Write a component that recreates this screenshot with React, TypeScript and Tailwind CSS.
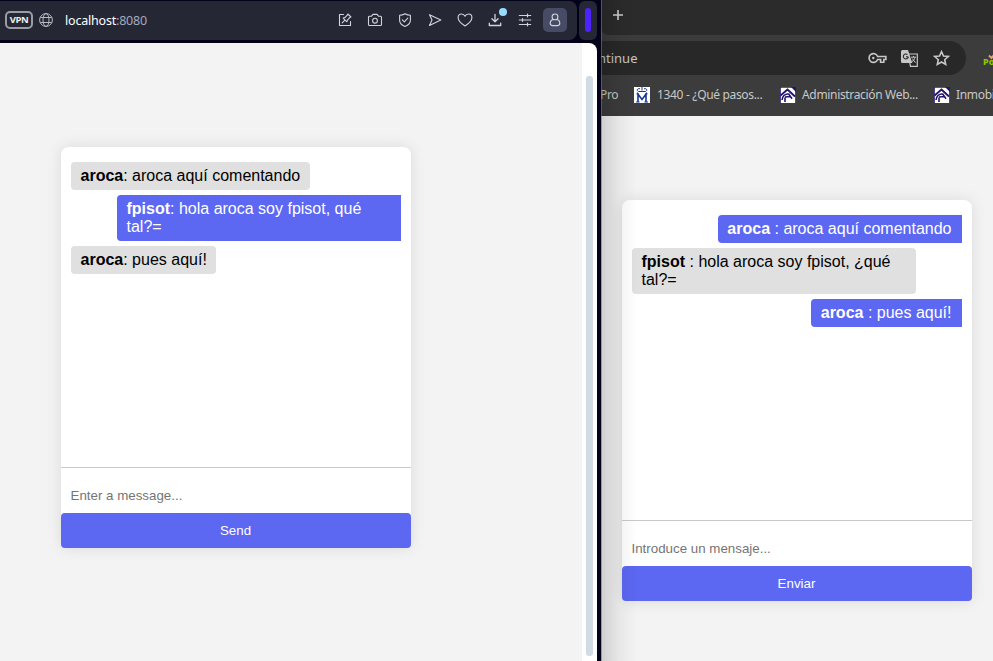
import type { ReactNode } from "react";

const arial = "font-['Liberation_Sans',Arial,sans-serif]";
const ui = "font-['Noto_Sans','Open_Sans',sans-serif]";

type Message = { author: string; text: string; tail?: string; mine?: boolean };

function Bubble({ author, text, tail, mine }: Message) {
  return (
    <div
      className={
        mine
          ? "max-w-[284px] self-end rounded-l-[4px] bg-[#5c67f2] py-[5px] pr-[10.5px] pl-[9.5px] text-white"
          : "max-w-[284px] self-start rounded-[4px] bg-[#e0e0e0] px-[9.5px] py-[5px] text-black"
      }
    >
      <strong className="font-bold">{author}</strong>
      {text}
      {tail && <span className="whitespace-nowrap">{tail}</span>}
    </div>
  );
}

function Chat({ messages, placeholder, action }: { messages: Message[]; placeholder: string; action: string }) {
  return (
    <div className={`flex h-[401px] w-[350px] shrink-0 flex-col rounded-t-[8px] rounded-b-[5px] bg-white shadow-[0_0_15px_rgba(0,0,0,0.1)] ${arial}`}>
      <div className="flex h-[321px] flex-col gap-[5px] border-b border-[#c9c9c9] px-[10px] pt-[15px] text-[16px] leading-[18px]">
        {messages.map((m) => (
          <Bubble key={m.text} {...m} />
        ))}
      </div>
      <div className="h-[45px] px-[9.5px] pt-[20px] text-[13.333px] leading-[15px] text-[#757575]">{placeholder}</div>
      <div className="flex h-[35px] items-center justify-center rounded-[4px] bg-[#5c67f2] pr-px text-[13.333px] leading-[15px] text-white">
        {action}
      </div>
    </div>
  );
}

function Line({ children }: { children: ReactNode }) {
  return (
    <svg width="16" height="16" viewBox="0 0 16 16" fill="none" stroke="currentColor" strokeWidth="1.1" strokeLinecap="round" strokeLinejoin="round">
      {children}
    </svg>
  );
}

const toolIcons: ReactNode[] = [
  <Line key="note">
    <path d="M6.5 2.5h-4v11h11V9.5" />
    <path d="m10.9 2 3 3-1.2.6-2.3 2.6-.5 1.6-3.7-3.7 1.6-.5 2.5-2.4zM7.6 8.4 5.2 10.8" />
  </Line>,
  <Line key="camera">
    <path d="M1.5 5.2a1 1 0 0 1 1-1h2L6 2.4h4l1.5 1.8h2a1 1 0 0 1 1 1v7.3a1 1 0 0 1-1 1h-11a1 1 0 0 1-1-1z" />
    <circle cx="8" cy="8.7" r="2.4" />
  </Line>,
  <Line key="shield">
    <path d="M8 1.7c1.8 1.1 3.6 1.5 5.4 1.5v5c0 2.9-2.1 4.9-5.4 6.2-3.3-1.3-5.4-3.3-5.4-6.2v-5c1.8 0 3.6-.4 5.4-1.5z" />
    <path d="m5.3 7.8 2 2 3.5-3.6" />
  </Line>,
  <Line key="send">
    <path d="M2.5 2.7 13.8 8 2.5 13.5 5 8z" />
  </Line>,
  <Line key="heart">
    <path d="M8 14C4.5 11.8 1.1 8.9 1.1 5.5c0-2 1.4-3.5 3.3-3.5C6 2 7.4 2.9 8 4.3 8.6 2.9 10 2 11.6 2c1.9 0 3.3 1.5 3.3 3.5 0 3.4-3.4 6.3-6.9 8.5z" />
  </Line>,
  <div key="download" className="relative">
    <Line>
      <path d="M8 2.3v7.2M4.9 6.7 8 9.8l3.1-3.1M2.3 11.2v2.3h11.4v-2.3" strokeWidth="1.3" />
    </Line>
    <span className="absolute -top-[4px] left-[12px] size-[8px] rounded-full bg-[#97dcff]" />
  </div>,
  <Line key="sliders">
    <path d="M2.3 3.5h11.4M2.3 8h11.4M2.3 12.5h11.4M10.5 2.2v2.6M5.5 6.7v2.6M10.5 11.2v2.6" strokeWidth="1.2" />
  </Line>,
  <div key="person" className="flex size-[24px] items-center justify-center rounded-[5px] bg-[#484b65]">
    <Line>
      <circle cx="8" cy="4.9" r="2.9" />
      <path d="M5.8 7.4c-1.8.7-2.6 2-2.6 3.6 0 1.7.9 2.6 2.4 2.6h4.8c1.5 0 2.4-.9 2.4-2.6 0-1.6-.8-2.9-2.6-3.6" />
    </Line>
  </div>,
];

function LeftWindow() {
  return (
    <div className="z-10 flex h-full w-[601px] shrink-0 flex-col bg-[#02031a]">
      <div className={`flex h-[43px] shrink-0 gap-[2px] pt-px pb-[3px] ${ui}`}>
        <div className="flex w-[577px] items-center rounded-r-[8px] bg-[#252834] pr-[7px] pb-px pl-[5px] text-[#d2d4dc]">
          <div className="flex h-[18px] w-[28px] items-center justify-center rounded-[5px] border-2 border-[#9c9da4] font-['Open_Sans',sans-serif] text-[9.5px] leading-none font-bold tracking-[-0.5px] text-[#eeeeef]">
            VPN
          </div>
          <svg className="ml-[6px]" width="14" height="14" viewBox="0 0 14 14" fill="none" stroke="#b8b9bf" strokeWidth="1">
            <circle cx="7" cy="7" r="6.4" />
            <ellipse cx="7" cy="7" rx="3" ry="6.4" />
            <path d="M1.3 4.5h11.4M1.3 9.5h11.4" />
          </svg>
          <div className="ml-[12px] pt-px text-[12.5px] leading-4 tracking-[-0.2px] whitespace-nowrap text-[#a4aabd]">
            <span className="text-white">localhost</span>:8080
          </div>
          <div className="ml-auto flex">
            {toolIcons.map((icon, i) => (
              <div key={i} className="flex h-[30px] w-[30px] items-center justify-center">
                {icon}
              </div>
            ))}
          </div>
        </div>
        <div className="flex w-[18px] items-center justify-center rounded-[6px] bg-[#252834] pb-px">
          <div className="h-[24px] w-[6px] rounded-[3px] bg-[#4d22ff]" />
        </div>
      </div>
      <div className="flex w-[597px] flex-1 overflow-hidden rounded-tr-[8px] bg-white">
        <div className="w-[582px] bg-[#f3f3f3] pt-[104px] pl-[61px]">
          <Chat
            placeholder="Enter a message..."
            action="Send"
            messages={[
              { author: "aroca", text: ": aroca aquí comentando" },
              { author: "fpisot", text: ": hola aroca soy fpisot, qué ", tail: "tal?=", mine: true },
              { author: "aroca", text: ": pues aquí!" },
            ]}
          />
        </div>
        <div className="mt-[33px] ml-[4px] h-[580px] w-[7px] rounded-[3px] bg-[#d1dbe4]" />
      </div>
    </div>
  );
}

function BrandIcon() {
  return (
    <svg width="16" height="16" viewBox="0 0 16 16" className="shrink-0">
      <path fill="#fff" d="M0 0h16v16H0z" />
      <g fill="none" stroke="#24136f">
        <path d="M.5 0v16M15.5 0v16M0 .4h16" strokeWidth=".8" />
        <path d="M.5 8.5 7.5 2.5 15 9.5" strokeWidth="1.9" />
        <path d="M2 13c.5-4 3-6 6.5-6.3M5 10l5.5-.5M8.5 6.7l3.5 5M5 10.5V15" strokeWidth="1.6" />
      </g>
      <path d="M11 0h5v5z" fill="#24136f" />
    </svg>
  );
}

function CrownIcon() {
  return (
    <svg width="16" height="16" viewBox="0 0 16 16" className="shrink-0">
      <path fill="#fff" d="M0 0h16v16H0z" />
      <g fill="none" stroke="#173694">
        <path d="M4.5 4.4C1.8 3.2 4 .9 6 1.8M11.5 4.4C14.2 3.2 12 .9 10 1.8M8 0v3.5M4.5 4.5h7" strokeWidth="1" />
        <path d="M4 15V7.2L8 12.4 12 7.2V15" strokeWidth="1.6" />
        <path d="M2 15h3.6M10.4 15H14M2.5 6.9h2M11.5 6.9h2" strokeWidth="1.1" />
      </g>
    </svg>
  );
}

function RightWindow() {
  return (
    <div className="relative flex h-full w-[392px] shrink-0 flex-col overflow-hidden bg-[#f3f3f3]">
      <div className="h-[35px] shrink-0 bg-[#3c3c3c]">
        <div className="h-full rounded-bl-[8px] bg-[#2b2b2b] pt-[10px] pl-[12px]">
          <svg width="10" height="10" viewBox="0 0 10 10" stroke="#d0d0d0" strokeWidth="1.6">
            <path d="M5 0v10M0 5h10" />
          </svg>
        </div>
      </div>
      <div className={`h-[81px] shrink-0 bg-[#3c3c3c] pt-[6px] ${ui}`}>
        <div className="flex">
          <div className="flex h-[34px] w-[365px] shrink-0 items-center rounded-r-full bg-[#282828] pr-[16px] text-[13px] text-[#c8c8c8]">
            <span className="-ml-[3px] pt-px">ntinue</span>
            <div className="ml-auto flex items-center">
              <svg width="19" height="12" viewBox="0 0 19 12" fill="none" stroke="#c7c7c7" strokeWidth="1.6">
                <path d="M9.6 4.5A4.4 4.4 0 1 0 9.6 7.5h3v2.7h3.2V7.5h2.1v-3z" />
                <circle cx="5.3" cy="6" r="1.2" fill="#c7c7c7" stroke="none" />
              </svg>
              <svg className="ml-[14px]" width="17" height="17" viewBox="0 0 17 17">
                <path d="M7 4h9.3v12.3H9.5z" fill="none" stroke="#c7c7c7" strokeWidth="1.2" />
                <path d="M1.5 0H7l4.3 13H1.5A1.5 1.5 0 0 1 0 11.5v-10A1.5 1.5 0 0 1 1.5 0z" fill="#c7c7c7" />
                <path d="M7.3 6.8H5M7.3 6.8A2.5 2.5 0 1 1 6.4 4.5" fill="none" stroke="#282828" strokeWidth="1.1" />
                <path d="M10 7.2h5M12.5 6v1.2M14 7.3c-.5 2-1.8 3.5-3 4.5M11.3 8.5l3.2 4.2" fill="none" stroke="#c7c7c7" />
              </svg>
              <svg className="ml-[15px]" width="17" height="16" viewBox="0 0 17 16" fill="none" stroke="#c7c7c7" strokeWidth="1.6">
                <path d="m8.5 1.7 2 4.3 4.8.5-3.6 3.2 1 4.7-4.2-2.4-4.2 2.4 1-4.7-3.6-3.2 4.8-.5z" />
              </svg>
            </div>
          </div>
          <svg className="mt-[11px] ml-[17px] shrink-0" width="20" height="16" viewBox="0 0 20 16">
            <path d="M6 3.5 8.5 6 12 2" fill="none" stroke="#e6a184" strokeWidth="2" />
            <text x="0" y="13" fontSize="9" fontWeight="800" fill="#8dc600">Po</text>
          </svg>
        </div>
        <div className="mt-[12px] flex h-[16px] items-center text-[12px] tracking-[-0.33px] whitespace-nowrap text-[#c8c8c8]">
          <span className="-ml-px w-[34px] shrink-0">Pro</span>
          <CrownIcon />
          <span className="ml-[7px] w-[123px] shrink-0">1340 - ¿Qué pasos...</span>
          <BrandIcon />
          <span className="ml-[6px] w-[132px] shrink-0">Administración Web...</span>
          <BrandIcon />
          <span className="ml-[6px] shrink-0">Inmobi</span>
        </div>
      </div>
      <div className="flex-1 pt-[84px] pl-[21px]">
        <Chat
          placeholder="Introduce un mensaje..."
          action="Enviar"
          messages={[
            { author: "aroca", text: " : aroca aquí comentando", mine: true },
            { author: "fpisot", text: " : hola aroca soy fpisot, ¿qué tal?=" },
            { author: "aroca", text: " : pues aquí!", mine: true },
          ]}
        />
      </div>
      <div className="pointer-events-none absolute inset-y-0 left-0 w-[36px] bg-linear-to-r from-black/15 via-black/5 to-transparent" />
      <div className="pointer-events-none absolute inset-y-0 left-0 w-px bg-[#777]/60" />
    </div>
  );
}

export default function App() {
  return (
    <div className="flex h-[661px] w-[993px] overflow-hidden">
      <LeftWindow />
      <RightWindow />
    </div>
  );
}
